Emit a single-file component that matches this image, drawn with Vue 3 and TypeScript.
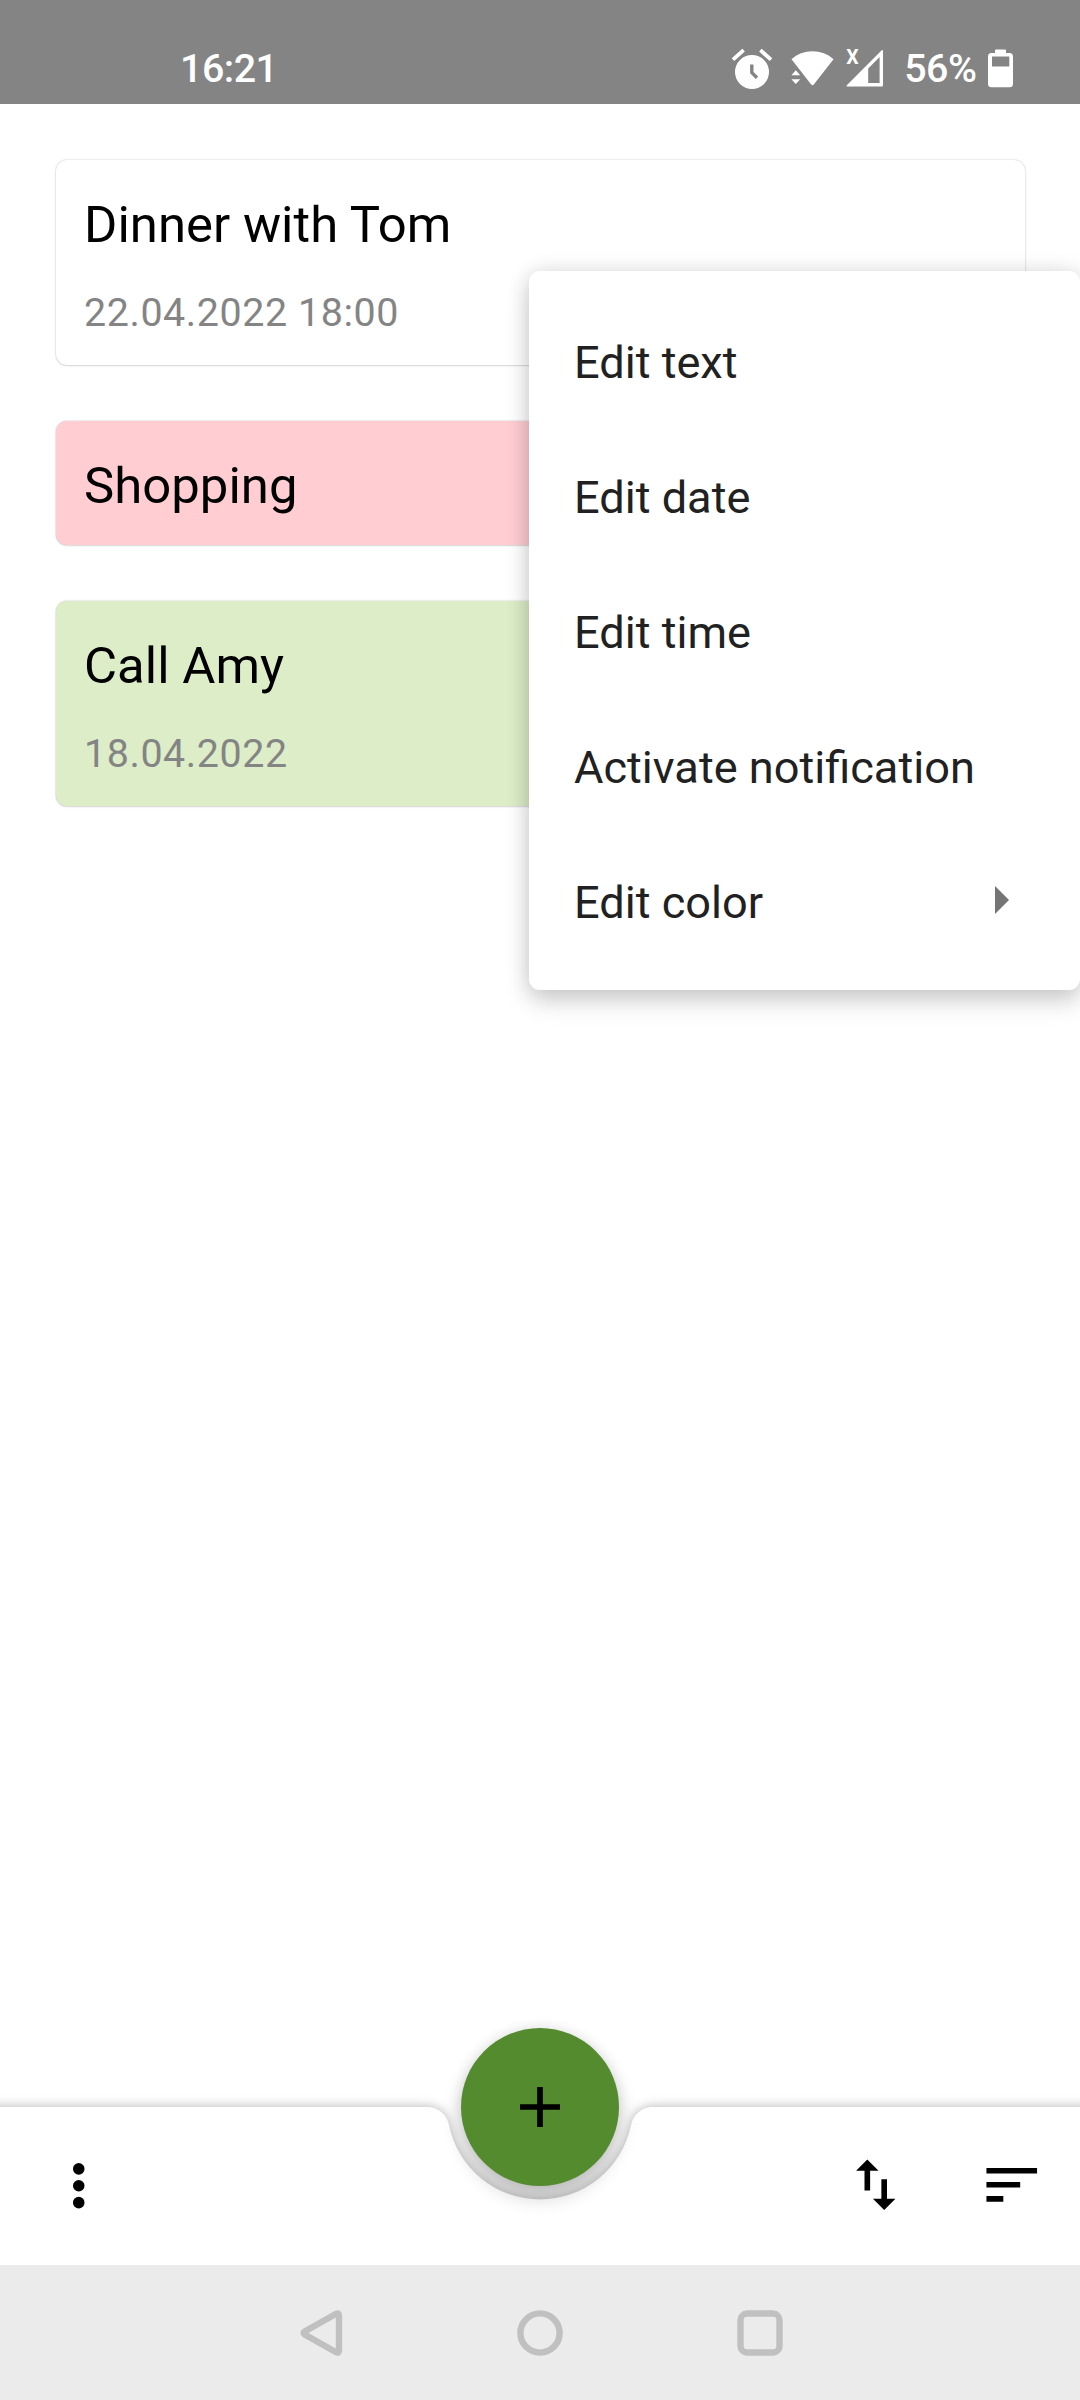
<script setup lang="ts">
interface Note {
  title: string
  date?: string
  color: string
}

interface MenuEntry {
  label: string
  submenu?: boolean
}

const notes: Note[] = [
  { title: 'Dinner with Tom', date: '22.04.2022 18:00', color: 'white' },
  { title: 'Shopping', color: 'red' },
  { title: 'Call Amy', date: '18.04.2022', color: 'green' },
]

const menu: MenuEntry[] = [
  { label: 'Edit text' },
  { label: 'Edit date' },
  { label: 'Edit time' },
  { label: 'Activate notification' },
  { label: 'Edit color', submenu: true },
]
</script>

<template>
  <div class="screen">
    <header class="status">
      <span class="clock">16:21</span>
      <div class="indicators">
        <svg class="alarm" width="42" height="42" viewBox="0 0 42 42">
          <circle cx="21" cy="24" r="17" fill="#fff" />
          <path d="M2 11.6 12.6 2.2M29.4 2.2 40 11.6" stroke="#fff" stroke-width="3.8" fill="none" />
          <path d="M20.8 16.5v8.1l5.2 5.2" stroke="#848484" stroke-width="3.4" fill="none" />
        </svg>
        <svg class="wifi" width="43" height="42" viewBox="0 0 43 42">
          <path d="M.5 11.2C6 6 13.5 3.2 21.5 3.2S37 6 42.5 11.2L22.8 36.6Q21.5 38 20.2 36.6Z" fill="#fff" />
          <path d="M4.8 22.3 9.2 27.2H.4ZM.4 31.2H9.2L4.8 36.1Z" fill="#fff" />
        </svg>
        <svg class="signal" width="38" height="42" viewBox="0 0 38 42">
          <path d="M.8 37.2 35.5 2.5Q37 1.300 37 3.2V37.2Q37 38.5 35.7 38.5H1.2Q0 38.3.8 37.2Z" fill="#fff" />
          <path d="M22.2 20.4 33.6 9V35H22.2Z" fill="#848484" />
          <text x="0.3" y="16" font-size="19.5" font-weight="700" fill="#fff">X</text>
        </svg>
        <span class="percent">56%</span>
        <svg class="battery" width="25" height="42" viewBox="0 0 25 42">
          <path d="M7 5V2.6Q7 1.5 8.2 1.5H16.8Q18 1.5 18 2.6V5H21.5Q25 5 25 8.5V35.7Q25 39.2 21.5 39.2H3.5Q0 39.2 0 35.7V8.5Q0 5 3.5 5Z" fill="#fff" />
          <path d="M4 8.5H21.3V18.5H4Z" fill="#848484" />
        </svg>
      </div>
    </header>

    <main class="notes">
      <article v-for="note in notes" :key="note.title" class="note" :class="note.color">
        <h2>{{ note.title }}</h2>
        <p v-if="note.date">{{ note.date }}</p>
      </article>
    </main>

    <nav class="menu">
      <div v-for="entry in menu" :key="entry.label" class="entry">
        <span>{{ entry.label }}</span>
        <svg v-if="entry.submenu" width="14" height="28" viewBox="0 0 14 28">
          <path d="M0 0 14 14 0 28Z" fill="#757575" />
        </svg>
      </div>
    </nav>

    <footer class="bar">
      <svg class="bar-shape" width="1080" height="158" viewBox="0 0 1080 158">
        <defs>
          <linearGradient id="cradle" x1="0" y1="0" x2="0" y2="1">
            <stop offset="0" stop-color="#000" stop-opacity="0" />
            <stop offset="1" stop-color="#000" stop-opacity="0.06" />
          </linearGradient>
        </defs>
        <path d="M449 17.9A92.8 92.8 0 0 0 631 17.9Z" fill="url(#cradle)" />
        <path
          class="surface"
          d="M-40 0H426.9A22.5 22.5 0 0 1 449 17.9A92.8 92.8 0 0 0 631 17.9A22.5 22.5 0 0 1 653.1 0H1120V200H-40Z"
        />
      </svg>
      <button class="fab" aria-label="Add">
        <svg width="40" height="40" viewBox="0 0 40 40">
          <path d="M20 0V40M0 20H40" stroke="#000" stroke-width="5.7" />
        </svg>
      </button>
      <div class="actions">
        <svg class="more" width="67.5" height="67.5" viewBox="0 0 24 24">
          <circle cx="12" cy="6" r="2.05" />
          <circle cx="12" cy="12" r="2.05" />
          <circle cx="12" cy="18" r="2.05" />
        </svg>
        <svg class="swap" width="67.5" height="67.5" viewBox="0 0 24 24">
          <path d="M16 17.01V10h-2v7.01h-3L15 21l4-3.99h-3zM9 3 5 6.99h3V14h2V6.99h3L9 3z" />
        </svg>
        <svg class="sort" width="67.5" height="67.5" viewBox="0 0 24 24">
          <path d="M3 18h6v-2H3v2zM3 6v2h18V6H3zm0 7h12v-2H3v2z" />
        </svg>
      </div>
    </footer>

    <div class="system-nav">
      <svg width="46" height="46" viewBox="0 0 46 46">
        <path d="M39.1 3.8Q42 2.3 42 6V40Q42 43.7 39.1 42.2L7.7 24.5Q5.5 23 7.7 21.5Z" />
      </svg>
      <svg width="46" height="46" viewBox="0 0 46 46">
        <circle cx="23" cy="23" r="19.6" />
      </svg>
      <svg width="46" height="46" viewBox="0 0 46 46">
        <rect x="3.5" y="3.5" width="39" height="39" rx="6.5" />
      </svg>
    </div>
  </div>
</template>

<style>
body {
  margin: 0;
}
</style>

<style scoped>
.screen {
  position: relative;
  display: flex;
  flex-direction: column;
  width: 1080px;
  height: 2400px;
  overflow: hidden;
  background: #fff;
  font-family: Roboto, "Liberation Sans", sans-serif;
}

.status {
  display: flex;
  flex: none;
  align-items: flex-start;
  justify-content: space-between;
  box-sizing: border-box;
  height: 104px;
  padding: 46px 67px 0 180px;
  background: #848484;
  color: #fff;
  font-size: 39.4px;
  font-weight: 500;
  line-height: 46px;
  letter-spacing: -0.5px;
}

.indicators {
  display: flex;
}

.indicators svg {
  display: block;
  margin-top: 2px;
  overflow: visible;
}

.wifi {
  margin-left: 17.5px;
}

.signal {
  margin-left: 12px;
}

.percent {
  margin-left: 20.5px;
}

.battery {
  margin-left: 11.5px;
}

.notes {
  display: flex;
  flex: 1;
  flex-direction: column;
  gap: 56px;
  padding: 56px 55.5px 0 56px;
}

.note {
  box-sizing: border-box;
  padding: 36px 28px 31px;
  border-radius: 11px;
  box-shadow: 0 0 2px rgba(0, 0, 0, 0.24), 0 1px 2px rgba(0, 0, 0, 0.1);
}

.note.white {
  background: #fff;
}

.note.red {
  background: #ffcdd2;
}

.note.green {
  background: #dcedc8;
}

h2 {
  margin: 0;
  color: #000;
  font-size: 50.8px;
  font-weight: 400;
  line-height: 57px;
  letter-spacing: 0.05px;
}

p {
  margin: 34px 0 -5px;
  color: #848484;
  font-size: 39.4px;
  line-height: 52px;
  letter-spacing: 0.58px;
}

.menu {
  position: absolute;
  top: 271px;
  right: 0;
  box-sizing: border-box;
  width: 551px;
  height: 719px;
  padding: 24px 0 20px;
  border-radius: 11px;
  background: #fff;
  box-shadow: 0 12px 24px rgba(0, 0, 0, 0.16), 0 0 22px rgba(0, 0, 0, 0.12);
}

.entry {
  display: flex;
  align-items: center;
  justify-content: space-between;
  height: 135px;
  padding: 0 71px 0 45px;
  color: #212121;
  font-size: 45.15px;
}

.entry svg {
  margin-top: -5px;
}

.bar {
  position: relative;
  flex: none;
  height: 158px;
}

.bar-shape {
  position: absolute;
  top: 0;
  left: 0;
  overflow: visible;
}

.surface {
  fill: #fff;
  filter: drop-shadow(0 0 6px rgba(0, 0, 0, 0.3));
}

.fab {
  position: absolute;
  top: -79px;
  left: 461px;
  display: flex;
  align-items: center;
  justify-content: center;
  width: 158px;
  height: 158px;
  padding: 0;
  border: 0;
  border-radius: 50%;
  background: #558b2f;
  box-shadow: 0 11px 20px rgba(0, 0, 0, 0.19), 0 0 14px rgba(0, 0, 0, 0.1);
}

.actions {
  position: relative;
  display: flex;
  align-items: center;
  height: 158px;
  padding: 0 34.6px 0 45.2px;
}

.swap {
  margin: -3px 68.3px 0 auto;
}

.sort {
  margin-top: -3px;
}

.system-nav {
  display: flex;
  position: relative;
  flex: none;
  align-items: center;
  justify-content: center;
  gap: 174px;
  height: 135px;
  background: #ebebeb;
}

.system-nav svg {
  fill: none;
  stroke: #c0c0c0;
  stroke-width: 6.4px;
}
</style>
